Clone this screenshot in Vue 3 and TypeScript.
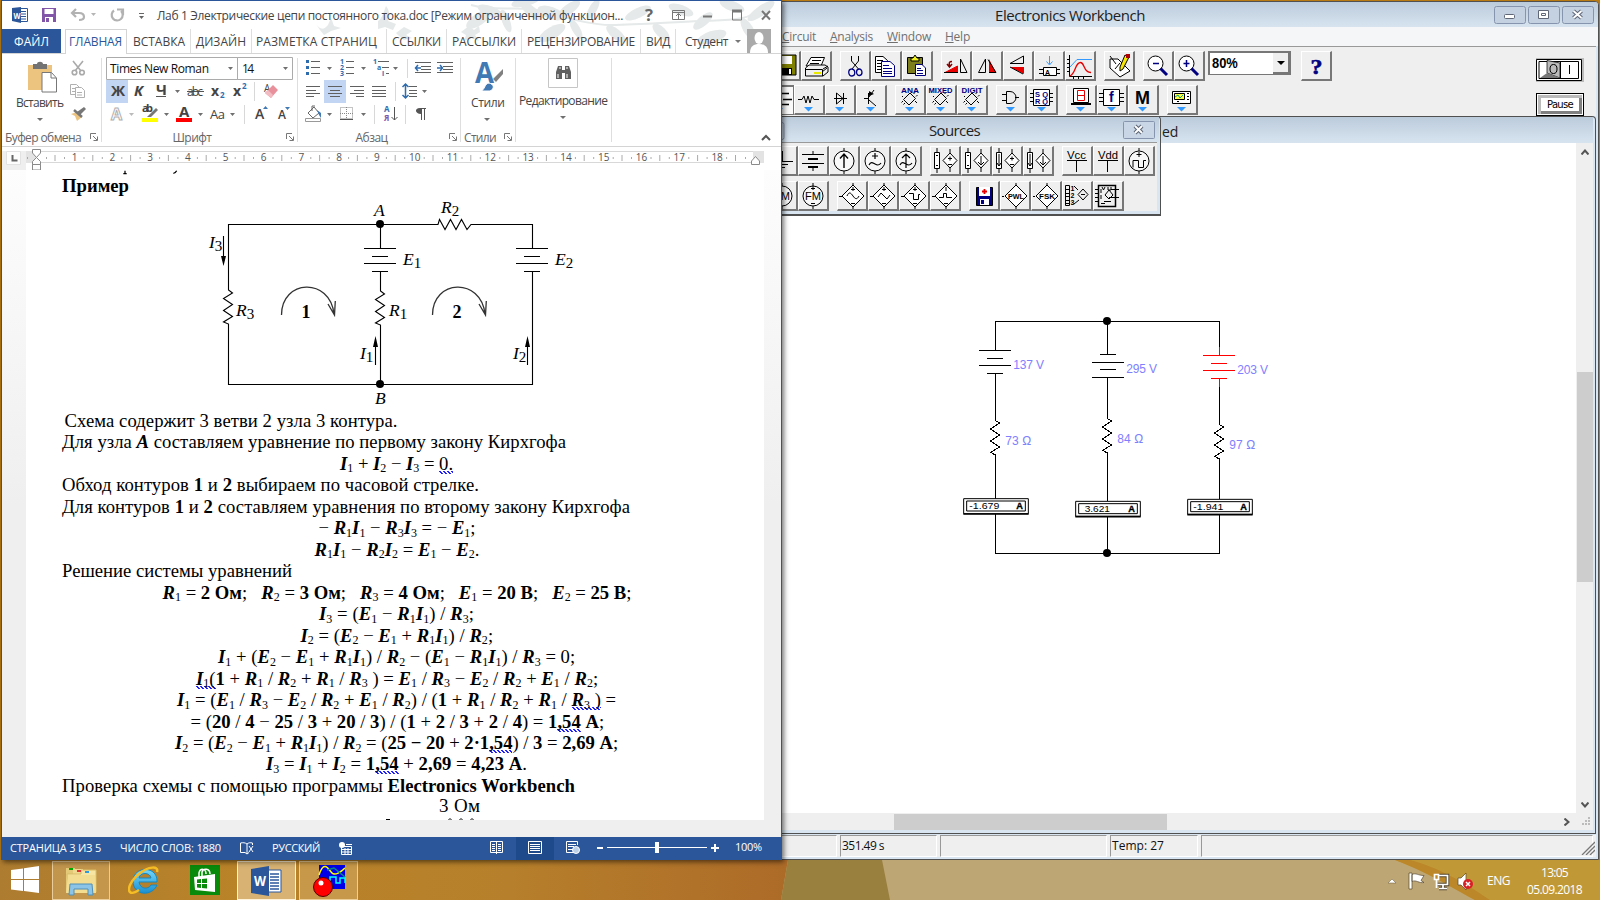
<script setup lang="ts">
import type { Directive } from 'vue'

// Spreads the letters of a label so that it takes exactly the given width.
const vFit: Directive<HTMLElement, number> = {
  mounted(el, { value }) {
    const width = el.getBoundingClientRect().width
    const count = (el.textContent ?? '').length
    if (count > 0) el.style.letterSpacing = `${(value - width) / count}px`
  },
}

interface Shape { d?: string; s?: string; f?: string; w?: number; t?: string; x?: number; y?: number; z?: number; l?: number; b?: boolean }
interface Tab { text: string; width: number; pad: number; fit: number }
interface Segment { text: string; bold: boolean; italic: boolean; sub: boolean }
interface Run { wavy: boolean; segments: Segment[] }

const tabs: Tab[] = [
  { text: 'ВСТАВКА', width: 64, pad: 6, fit: 52 },
  { text: 'ДИЗАЙН', width: 61, pad: 5, fit: 50 },
  { text: 'РАЗМЕТКА СТРАНИЦ', width: 135, pad: 4, fit: 121 },
  { text: 'ССЫЛКИ', width: 60, pad: 5, fit: 49 },
  { text: 'РАССЫЛКИ', width: 75, pad: 5, fit: 64 },
  { text: 'РЕЦЕНЗИРОВАНИЕ', width: 119, pad: 5, fit: 108 },
  { text: 'ВИД', width: 35, pad: 5, fit: 24 },
]

// Markup: * bold, % italic, ~ proofing underline, _ subscript for the next character.
function parse(source: string): Run[] {
  const runs: Run[] = [{ wavy: false, segments: [] }]
  let bold = false
  let italic = false
  let sub = false
  for (const ch of source) {
    if (ch === '*') bold = !bold
    else if (ch === '%') italic = !italic
    else if (ch === '~') runs.push({ wavy: !runs[runs.length - 1].wavy, segments: [] })
    else if (ch === '_') sub = true
    else {
      const list = runs[runs.length - 1].segments
      const last = list[list.length - 1]
      if (last && !sub && !last.sub && last.bold === bold && last.italic === italic) last.text += ch
      else list.push({ text: ch, bold: bold && !sub, italic: italic && !sub, sub })
      sub = false
    }
  }
  return runs
}
const v = (s: string) => s.replace(/([RIE])(\d)/g, '*%$1%*_$2')

const lines = [
  { left: 38.5, fit: 333, text: 'Схема содержит 3 ветви 2 узла 3 контура.' },
  { left: 36, fit: 504, text: 'Для узла *%A%* составляем уравнение по первому закону Кирхгофа' },
  { left: 314, fit: 113, text: v('I1 + I2 − I3 = ~0.~') },
  { left: 36, fit: 417, text: 'Обход контуров *1* и *2* выбираем по часовой стрелке.' },
  { left: 36, fit: 568, text: 'Для контуров *1* и *2* составляем уравнения по второму закону Кирхгофа' },
  { left: 292.5, fit: 157, text: v('− R1I1 − R3I3 = − E1;') },
  { left: 288.5, fit: 165, text: v('R1I1 − R2I2 = E1 − E2.') },
  { left: 36, fit: 230, text: 'Решение системы уравнений' },
  { left: 136.5, fit: 469, text: v('R1 = *2 Ом*;   R2 = *3 Ом*;   R3 = *4 Ом*;   E1 = *20 В*;   E2 = *25 В*;') },
  { left: 293, fit: 155, text: v('I3 = (E1 − R1I1) / R3;') },
  { left: 274.5, fit: 192.5, text: v('I2 = (E2 − E1 + R1I1) / R2;') },
  { left: 192, fit: 357, text: v('I1 + (E2 − E1 + R1I1) / R2 − (E1 − R1I1) / R3 = 0;') },
  { left: 170, fit: 402, text: v('~I1(~*1* + R1 / R2 + R1 / R3 ) = E1 / R3 − E2 / R2 + E1 / R2;') },
  { left: 151, fit: 439, text: v('I1 = (E1 / R3 − E2 / R2 + E1 / R2) / (*1* + R1 / R2 + R1 / ~R3 )~ =') },
  { left: 164.5, fit: 413.5, text: '= (*20* / *4* − *25* / *3* + *20* / *3*) / (*1* + *2* / *3* + *2* / *4*) = *1~,54~ А*;' },
  { left: 149, fit: 443, text: v('I2 = (E2 − E1 + R1I1) / R2 = (*25 − 20* + *2·1~,54~*) / *3* = *2,69 А*;') },
  { left: 240, fit: 261, text: v('I3 = I1 + I2 = *1~,54~* + *2,69* = *4,23 А*.') },
  { left: 36, fit: 513, text: 'Проверка схемы с помощью программы *Electronics Workbench*' },
].map((line) => ({ ...line, runs: parse(line.text) }))

const rulerNumbers = Array.from({ length: 18 }, (_, i) => ({ n: i + 1, x: 74.5 + i * 37.8 }))

const K = '#000'
const R = '#e80000'
const N = '#000080'
const B = '#3399ff'
const drop: Shape = { d: 'M10 22H19L14.500 26.500Z', f: B }
const chip: Shape[] = [
  { d: 'M15 8L20.500 13.500L14 20L8.500 14.500Z M8 16L6.500 17.500M10 18L8.500 19.500M18.500 9L20 7.500M21 11.500L22.500 10M8 12L7 11M20 16L22 18', s: K },
  drop,
]
const circle = 'M15 5A10 10 0 1 1 15 25A10 10 0 1 1 15 5M15 2V5M15 25V28'
const diamond = 'M16 4L27 15L16 26L5 15Z M16 2V4M16 26V28'
const dependent = 'M4.500 6.500H9.500V22.500H4.500Z M7 2V6M7 23V27M20 7L27 14.500L20 22L13 14.500Z M20 3V7M20 22V26'

const icons: Record<string, Shape[]> = {
  save: [{ d: 'M8 4H26V24H8Z', s: K, f: '#808000' }, { d: 'M11 5H22V13H11Z', f: '#fff' }, { d: 'M11 17H22V24H11Z', f: K }, { d: 'M19 18H21V23H19Z', f: '#fff' }],
  print: [{ d: 'M10 6.500H23.500L20 15H5Z', s: K, f: '#fff' }, { d: 'M11 9.500H20M9 12.500H18', s: K }, { d: 'M4.500 17L8 14H24L27 16V21L22 25H4.500Z', s: K, f: '#efefef' }, { d: 'M4 18.500H21.500V25M22 18L27 15M21 21L26 17', s: K }, { d: 'M13 22H20', s: '#e8e800', w: 2 }],
  cut: [{ d: 'M11.500 5V10L18.500 18M18.500 5V10L12 18', s: K }, { d: 'M11.500 18A3 3.500 0 1 0 12 25A3 3.500 0 1 0 11.500 18M19 18A2.500 3 0 1 0 19.500 24.500A2.500 3 0 1 0 19 18', s: N, w: 1.3 }],
  copy: [{ d: 'M4.500 5.500H12L16.500 9.500V21.500H4.500Z', s: K, f: '#fff' }, { d: 'M6 9.500H12M6 12.500H12M6 15.500H12M6 18.500H12', s: K }, { d: 'M10.500 10.500H19L23.500 14.500V25.500H10.500Z', s: N, f: '#fff' }, { d: 'M12 14.500H18M12 17.500H21M12 20.500H21M12 22.500H21', s: N }],
  paste: [{ d: 'M5.500 6.500H20.500V22.500H5.500Z', s: K, f: '#7d7d1e' }, { d: 'M9 10V7H11L13 4L15 7H17V10Z', s: K, f: '#f0ef20' }, { d: 'M13.500 13.500H20L23.500 17V24.500H13.500Z', s: N, f: '#fff' }, { d: 'M15 17.500H19M15 19.500H21M15 22.500H21', s: N }],
  rotate: [{ d: 'M4 21.500H16.500V15Z', s: R, f: R }, { d: 'M3 21.500H17M19.500 21.500V8L26 21.500Z', s: K }, { d: 'M11 10.500C7 10.500 8.500 13 8.500 16M6 13L8.500 16L11 13', s: '#800000', w: 1.5 }],
  flipH: [{ d: 'M6.500 21.500H13.500V8Z', s: K }, { d: 'M17 21.500H24L17 8Z', f: R }, { d: 'M16 8.500L24 21.500H17', s: K }],
  flipV: [{ d: 'M7 12.500L20.500 5V12.500Z', s: K }, { d: 'M7 16H21V23Z', f: R }, { d: 'M7 16L20 23', s: K }],
  sub: [{ d: 'M15.500 5V13M12.500 10.500L15.500 14L18.500 10.500', s: B }, { d: 'M9.500 16.500H22.500V24.500H9.500Z M5 18.500H9M5 22.500H9M23 18.500H26M23 22.500H26', s: K, f: '#fff' }, { t: 'A', x: 11, y: 23.5, z: 7, b: true }],
  graph: [{ d: 'M4.500 4V25.500H27M2 8.500H4M2 12.500H4M2 16.500H4M2 20.500H4M8.500 26V28M13.500 26V28M18.500 26V28', s: K }, { d: 'M5 16L12 8.500H27', s: B }, { d: 'M5 25C11 22 10 11.500 15.500 11.500C20 11.500 18 21.500 26 21.500', s: R, w: 1.3 }],
  edit: [{ d: 'M6 8L14 8L26 20L16 26L6 17Z', s: K, f: '#fff' }, { d: 'M6 5L12 13M11 18L16 12', s: K }, { d: 'M21 4L25 6L19 18L16 20V16Z', s: K, f: '#f7e600' }, { d: 'M22 3H26V7H22Z', f: '#b00000' }],
  zoomOut: [{ d: 'M12.500 5A7.500 7.500 0 1 1 12.500 20A7.500 7.500 0 1 1 12.500 5', s: K, f: '#fff' }, { d: 'M10 12.500H16', s: N, w: 1.5 }, { d: 'M17.500 17.500L24 24', s: N, w: 3 }],
  zoomIn: [{ d: 'M12.500 5A7.500 7.500 0 1 1 12.500 20A7.500 7.500 0 1 1 12.500 5', s: K, f: '#fff' }, { d: 'M9.500 12.500H15.500M12.500 9V16', s: N, w: 1.5 }, { d: 'M17.500 17.500L24 24', s: N, w: 3 }],
  source: [{ d: 'M17 7.500H25M19 13.500H28M17 18.500H25', s: K, w: 1.4 }, drop],
  resistor: [{ d: 'M4 14.500H8L10 11L12 18L14 11L16 18L18 11L20 14.500H25', s: K }, drop],
  diode: [{ d: 'M9 13.500H22M11.500 8V19L18 13.500ZM18.500 8V19', s: K }, drop],
  transistor: [{ d: 'M8 13.500H12M12.500 8V19M13 12L18 5M13 15L20 21', s: K }, { d: 'M13 11V6L18 9Z', f: K }, drop],
  ana: [{ t: 'ANA', x: 6, y: 7.5, z: 7.5, b: true, l: 18, s: N }, ...chip],
  mixed: [{ t: 'MIXED', x: 2.5, y: 7.5, z: 7.5, b: true, l: 24, s: N }, ...chip],
  digit: [{ t: 'DIGIT', x: 4.5, y: 7.5, z: 7.5, b: true, l: 21, s: N }, ...chip],
  gate: [{ d: 'M6 9.500H10M6 15.500H10M19 12.500H23M10.500 6.500H14A6 6 0 0 1 14 18.500H10.500Z', s: K }, drop],
  flop: [{ d: 'M6.500 4.500H22.500V20.500H6.500ZM3 8.500H6M3 12.500H6M3 16.500H6M23 8.500H26M23 12.500H26M23 16.500H26', s: K, f: '#fff' }, { t: 'S Q', x: 8, y: 11.5, z: 7, b: true, l: 13, s: N }, { t: 'R Q', x: 8, y: 19, z: 7, b: true, l: 13, s: N }, drop],
  seg: [{ d: 'M7.500 3.500H22.500V17.500H7.500Z', s: K, f: '#fff' }, { d: 'M11.500 5.500H18.500V15.500H11.500ZM11.500 10.500H18.500', s: R, w: 1 }, { d: 'M5 18H25V20H5Z', f: K }, drop],
  func: [{ d: 'M6.500 4.500H22.500V20.500H6.500ZM2 8.500H6M2 12.500H6M2 16.500H6M23 8.500H27M23 12.500H27M23 16.500H27', s: K, f: '#fff' }, { t: 'f', x: 12, y: 17, z: 14, b: true, s: N }, drop],
  misc: [{ t: 'M', x: 7, y: 19, z: 19, b: true, l: 15 }, drop],
  scope: [{ d: 'M5.500 6.500H23.500V18.500H5.500Z', s: K, f: '#fff' }, { d: 'M7.500 8.500H17.500V14.500H7.500Z', s: K, f: '#ffff40' }, { d: 'M8 12L11 10L13 13L16 10', s: '#00a0a0' }, { d: 'M20 8.500H22M20 11.500H22M20 14.500H22M10 16.500H12', s: K }, drop],
  ground: [{ d: 'M15.500 5V15M8 15.500H26M11 18.500H21M14 21.500H18', s: K }],
  battery: [{ d: 'M15 5V8M4 8.500H26M15 22V25', s: K }, { d: 'M10 13H20M10 21H20', s: K, w: 2 }, { d: 'M4 17.500H26', s: K }],
  current: [{ d: circle, s: K, f: '#f8f8f8' }, { d: 'M15 8V22M11 12.500L15 8L19 12.500', s: K, w: 1.4 }],
  ac: [{ d: circle, s: K, f: '#f8f8f8' }, { d: 'M15 7V13M12 10H18M9 19C11 15 13 17 15 18S19 20 21 17', s: K, w: 1.2 }],
  acCurrent: [{ d: circle, s: K, f: '#f8f8f8' }, { d: 'M15 8V22M11 12L15 8L19 12M9 19C11 15 13 17 15 18S19 20 21 17', s: K, w: 1.2 }],
  vv: [{ d: dependent, s: K, f: '#fff' }, { d: 'M6 9.500H8M6 19.500H8M18 12.500H22M20 10.500V14.500M18 18.500H22', s: K }],
  vc: [{ d: dependent, s: K, f: '#fff' }, { d: 'M6 9.500H8M6 19.500H8M20 10V19M17 16L20 19L23 16', s: K }],
  cv: [{ d: dependent, s: K, f: '#fff' }, { d: 'M7 8V20M5 17L7 20L9 17M18 12.500H22M20 10.500V14.500M18 18.500H22', s: K }],
  cc: [{ d: dependent, s: K, f: '#fff' }, { d: 'M7 8V20M5 17L7 20L9 17M20 10V19M17 16L20 19L23 16', s: K }],
  vcc: [{ t: 'Vcc', x: 5, y: 12.5, z: 11.5, l: 19 }, { d: 'M5 14.500H25M14.500 15V26', s: K }],
  vdd: [{ t: 'Vdd', x: 5, y: 12.5, z: 11.5, l: 20 }, { d: 'M5 14.500H25M14.500 15V26', s: K }],
  clock: [{ d: circle, s: K, f: '#f8f8f8' }, { d: 'M15 6V11M12.500 8.500H17.500M9 21.500V14.500H14.500V21.500H19.500V14.500H22', s: K }],
  am: [{ d: circle, s: K, f: '#f8f8f8' }, { t: 'AM', x: 7, y: 19, z: 11, l: 16 }],
  fm: [{ d: circle, s: K, f: '#f8f8f8' }, { t: 'FM', x: 7, y: 18.5, z: 11, l: 16 }, { d: 'M15 5V9M13 7.500H17M13 22.500H17', s: K }],
  sine: [{ d: diamond, s: K, f: '#fff' }, { d: 'M10 15C12 10 14 12 16 15S20 19 22 15M16 6V10M14 8.500H18M14 22.500H18M2 15.500H5', s: K }],
  tri: [{ d: diamond, s: K, f: '#fff' }, { d: 'M10 16L13 12L19 18L22 14M16 6V10M14 8.500H18M14 22.500H18M2 15.500H5', s: K }],
  square: [{ d: diamond, s: K, f: '#fff' }, { d: 'M10 12.500H14.500V18.500H19.500V13.500H21M16 6V10M14 8.500H18M14 22.500H18M2 15.500H5', s: K }],
  pulse: [{ d: diamond, s: K, f: '#fff' }, { d: 'M9 16.500H13.500V12.500H16.500V16.500H22M16 6V10M14 22.500H18M2 15.500H5', s: K }],
  disk: [{ d: 'M7.500 6.500H23.500V24.500H7.500Z', s: K, f: N }, { d: 'M10 6H21V15H10Z', f: '#fff' }, { d: 'M15.500 8V13M13 10.500H18', s: R, w: 1.8 }, { d: 'M11 18H20V24H11Z', f: '#fff' }, { d: 'M12 19H15V23H12Z', f: N }],
  pwl: [{ d: diamond, s: K, f: '#fff' }, { t: 'PWL', x: 8, y: 18, z: 8, l: 16, b: true }, { d: 'M2 15.500H4', s: K }],
  fsk: [{ d: diamond, s: K, f: '#fff' }, { t: 'FSK', x: 8, y: 18, z: 8, l: 16, b: true }, { d: 'M2 15.500H4', s: K }],
  poly: [{ d: 'M3.500 4.500H7.500V24.500H3.500ZM4 8.500H8M4 12.500H8M4 15.500H8M4 19.500H8M4 22.500H8M21 8L26 13.500L21 19L16 13.500ZM19 13.500H23M12 5L16 9M12 23L17 19', s: K }, { t: '1', x: 8.5, y: 10, z: 7, b: true }, { t: '2', x: 8.5, y: 17, z: 7, b: true }, { t: '3', x: 8.5, y: 24, z: 7, b: true }],
  nonlin: [{ d: 'M5.500 4.500H22.500V25.500H5.500Z', s: K, w: 1.5 }, { d: 'M2 8.500H5M2 12.500H5M2 16.500H5M2 20.500H5M9 6L10.500 9L12 6M15 6V9H18V6M12 14L16 9L20 14L16 18ZM8 8V12M8 14V18M11 20.500H18M8 22.500H12M16 16.500H26M18 8.500H26', s: K }],
}

const toolRow1 = [['save', 'print'], ['cut', 'copy', 'paste'], ['rotate', 'flipH', 'flipV', 'sub', 'graph'], ['edit'], ['zoomOut', 'zoomIn']]
const toolRow2 = [['source', 'resistor', 'diode', 'transistor'], ['ana', 'mixed', 'digit'], ['gate', 'flop'], ['seg', 'func', 'misc'], ['scope']]
const sourceRow1 = [['ground', 'battery', 'current', 'ac', 'acCurrent'], ['vv', 'vc', 'cv', 'cc'], ['vcc', 'vdd', 'clock']]
const sourceRow2 = [['am', 'fm'], ['sine', 'tri', 'square', 'pulse'], ['disk', 'pwl', 'fsk', 'poly', 'nonlin']]
const panels = [toolRow1, toolRow2, sourceRow1, sourceRow2]

const meters = [
  { x: 70, y: 596, value: '-1.679' },
  { x: 406, y: 604, value: '3.621' },
  { x: 742, y: 598, value: '-1.941' },
]
const resistors = ['M166.5 362l12 7-27 18 27 18-27 18 27 18-27 16 15 8', 'M502.5 356l12 7-27 18 27 18-27 18 27 18-27 16 15 8', 'M838.5 374l12 7-27 18 27 18-27 18 27 18-27 16 15 8']
</script>

<template>
  <div class="desktop">
    <section class="ewb">
      <header class="ewb-title">
        <span v-fit="150" class="ewb-name">Electronics Workbench</span>
        <div class="win-buttons">
          <svg v-for="k in 3" :key="k" width="32" height="18" viewBox="0 0 32 18">
            <rect x=".5" y=".5" width="31" height="17" rx="2" fill="#c3d1e1" stroke="#8794ad" />
            <rect v-if="k === 1" x="10.500" y="8.500" width="10" height="4" rx="1" fill="#fff" stroke="#606878" />
            <path v-if="k === 2" d="M10.500 4.500h10v8h-10zM13.500 7.500h4v2h-4z" fill="#fff" stroke="#606878" />
            <path v-if="k === 3" d="M11.500 5l8 7m0-7l-8 7" stroke="#606878" stroke-width="4" />
            <path v-if="k === 3" d="M11.500 5l8 7m0-7l-8 7" stroke="#fff" stroke-width="1.800" />
          </svg>
        </div>
      </header>
      <nav class="ewb-menu">
        <span v-fit="34"><u>C</u>ircuit</span><span v-fit="43"><u>A</u>nalysis</span><span v-fit="44"><u>W</u>indow</span><span v-fit="25"><u>H</u>elp</span>
      </nav>
      <div class="ewb-tools">
        <div class="tool-rows">
          <div v-for="p in 2" :key="p" class="row" :class="`row-${p}`">
            <div v-for="(g, gi) in panels[p - 1]" :key="gi" class="cluster">
              <svg v-for="name in g" :key="name" class="tool" :class="{ pressed: name === 'source' }" viewBox="1 1 28 27">
                <template v-for="(s, i) in icons[name]" :key="i">
                  <path v-if="s.d" :d="s.d" :stroke="s.s || 'none'" :fill="s.f || 'none'" :stroke-width="s.w || 1" />
                  <text v-else :x="s.x" :y="s.y" :font-size="s.z" :font-weight="s.b ? 700 : 400" :fill="s.s || '#000'" :textLength="s.l" lengthAdjust="spacingAndGlyphs">{{ s.t }}</text>
                </template>
              </svg>
            </div>
            <template v-if="p === 1">
              <div class="combo"><b>80%</b><i><svg width="8" height="4"><path d="M0 0h8l-4 4z" /></svg></i></div>
              <svg class="tool help" viewBox="1 1 28 27"><text x="9.500" y="23" font-size="22" font-weight="700" fill="#000080" font-family="Liberation Serif" textLength="12" lengthAdjust="spacingAndGlyphs" stroke="#000080" stroke-width=".6">?</text></svg>
            </template>
          </div>
        </div>
        <div class="power">
          <svg width="48" height="24" viewBox="0 0 48 24">
            <path d="M0 0H48V24H0Z" fill="#bbb" /><path d="M.5 1.500H45.500V22.500H.5Z" fill="#fff" stroke="#000" /><path d="M3 3.500H42.500V20.500H3Z" fill="none" stroke="#000" />
            <path d="M11 2.500L24 5V20L11 15Z" fill="#bbb" stroke="#000" stroke-width=".7" /><path d="M11 15L4 20H24Z" fill="#777" />
            <ellipse cx="17.500" cy="11" rx="3.500" ry="4.500" fill="none" stroke="#000" /><path d="M24.500 4V20M33.500 7V16" stroke="#000" />
          </svg>
          <div class="pause"><span v-fit="26">Pause</span></div>
        </div>
      </div>

      <div class="sheet">
        <div class="sheet-title"><span v-fit="16">ed</span></div>
        <div class="sheet-body">
          <div class="canvas">
            <svg class="schematic" width="360" height="270" viewBox="0 0 1080 810">
              <g fill="none" stroke="#000" stroke-width="3" shape-rendering="crispEdges">
                <path d="M166.500 151V64.500H838.500V142M166.500 220V362M166.500 466V596M166.500 643V760.500H838.500V646M838.500 260V374M838.500 478V598M502.500 64V163M502.500 233V356M502.500 460V604M502.500 652V760" />
                <path d="M117 151.500H213M141 175.500H189M117 196.500H213M141 220.500H189M480 163.500H528M456 187.500H552M480 208.500H528M456 232.500H552" />
                <path stroke="#f00" d="M838.500 142V166M838.500 236V260M789 166.500H885M813 190.500H861M789 211.500H885M813 235.500H861" />
                <path v-for="d in resistors" :key="d" :d="d" />
              </g>
              <circle cx="501" cy="63" r="12" /><circle cx="501" cy="759" r="12" />
              <g v-for="m in meters" :key="m.value">
                <path :d="`M${m.x + 1} ${m.y}h194v45h-194z`" fill="#fff" stroke="#000" stroke-width="3" />
                <path :d="`M${m.x} ${m.y + 46}h196`" stroke="#000" stroke-width="5" />
                <path :d="`M${m.x + 10} ${m.y + 7}h176v30h-176z`" fill="#fff" stroke="#000" stroke-width="3" />
                <text :x="m.x + (m.value[0] === '-' ? 18 : 28)" :y="m.y + 32" font-size="27" :textLength="m.value[0] === '-' ? 90 : 76" lengthAdjust="spacingAndGlyphs">{{ m.value }}</text>
                <text :x="m.x + 159" :y="m.y + 31" font-size="27" font-weight="700" textLength="20" lengthAdjust="spacingAndGlyphs" stroke="#000">A</text>
              </g>
              <g fill="#8080ff" font-size="36">
                <text x="220" y="206" textLength="92">137 V</text><text x="559" y="219" textLength="92">295 V</text><text x="892" y="221" textLength="92">203 V</text>
                <text x="196" y="435" textLength="78">73 Ω</text><text x="532" y="429" textLength="78">84 Ω</text><text x="868" y="447" textLength="78">97 Ω</text>
              </g>
            </svg>
          </div>
          <div class="vscroll">
            <svg width="8" height="6"><path d="M.5 5.500L4 1.500L7.500 5.500" /></svg>
            <i></i>
            <svg width="8" height="6"><path d="M.5 .5L4 4.500L7.500 .5" /></svg>
          </div>
        </div>
        <div class="hscroll"><i></i><svg width="6" height="8"><path d="M.5 .5L4.500 4L.5 7.500" /></svg><svg class="grip" width="9" height="9"><path d="M6 0h2v2h-2zM3 3h2v2h-2zM6 3h2v2h-2zM0 6h2v2h-2zM3 6h2v2h-2zM6 6h2v2h-2z" /></svg></div>
      </div>

      <footer class="ewb-status">
        <span class="s1"></span><span class="s2"><em v-fit="42">351.49 s</em></span><span class="s3"></span><span class="s4"><em v-fit="52">Temp:  27</em></span><span class="s5"></span>
        <svg width="14" height="14"><path d="M1 14L14 1M5 14L14 5M9 14L14 9" stroke="#777" fill="none" stroke-width="1.300" /></svg>
      </footer>

      <div class="sources">
        <header><span v-fit="51">Sources</span>
          <svg class="stub" width="8" height="18"><rect x="-10" y=".5" width="15" height="17" rx="2" fill="none" stroke="#8794ad" /></svg>
          <svg class="x" width="32" height="18" viewBox="0 0 32 18"><rect x=".5" y=".5" width="31" height="17" rx="1" fill="#c9d6e5" stroke="#8794ad" /><path d="M12 5l7 7m0-7l-7 7" stroke="#606878" stroke-width="4" /><path d="M12 5l7 7m0-7l-7 7" stroke="#fff" stroke-width="1.800" /></svg>
        </header>
        <div class="source-rows">
          <div v-for="p in [2, 3]" :key="p" class="row">
            <div v-for="(g, gi) in panels[p]" :key="gi" class="cluster">
              <svg v-for="name in g" :key="name" class="tool" viewBox="1 1 28 27">
                <template v-for="(s, i) in icons[name]" :key="i">
                  <path v-if="s.d" :d="s.d" :stroke="s.s || 'none'" :fill="s.f || 'none'" :stroke-width="s.w || 1" />
                  <text v-else :x="s.x" :y="s.y" :font-size="s.z" :font-weight="s.b ? 700 : 400" :fill="s.s || '#000'" :textLength="s.l" lengthAdjust="spacingAndGlyphs">{{ s.t }}</text>
                </template>
              </svg>
            </div>
          </div>
        </div>
      </div>
    </section>

    <section class="word">
      <svg class="foliage" width="470" height="48" viewBox="310 0 470 48" fill="#e3e7e7">
        <path d="M315 23c4 6 8 6 12 1l3-7 3 8 7 2-10 3-7 4-4-5zM377 20c4-2 6-10 8-15 4 5 4 12 2 15l8 3-3 6-8-3-7 2zM395 32l8-6 8 4-6 4 6 3-8 2-4-3zM460 31l8-6 5 4 5-4 1 6-5 3 4 6-7-3-8 3 2-6z" />
        <path d="M470 4c20 6 40 2 60 4s50 16 80 16 60-3 90-4 50 0 60-14" fill="none" stroke="#e3e7e7" stroke-width="2" />
        <ellipse v-for="(e, i) in [[478,18,15,6,-35],[489,10,13,5,20],[505,20,12,4,70],[530,10,13,5,40],[525,0,15,5,-15],[550,12,14,6,20],[551,32,15,6,-30],[575,28,11,4,60],[568,8,13,5,-35],[592,8,11,4,-60],[615,33,12,5,40],[637,12,14,5,-25],[660,31,11,5,45],[680,9,13,5,20],[702,20,12,5,-40],[711,36,15,6,-18],[731,5,13,5,20],[747,28,12,5,60],[760,10,16,5,-35]]" :key="i" :cx="e[0]" :cy="e[1]" :rx="e[2]" :ry="e[3]" :transform="`rotate(${e[4]} ${e[0]} ${e[1]})`" />
      </svg>
      <header class="word-title">
        <svg width="155" height="28" viewBox="2 1 155 28" fill="none">
          <path d="M20 8.500H27.500V21.500H20" stroke="#2b579a" fill="#fff" /><path d="M21 11.500h5m-5 2.500h5m-5 2.500h5m-5 2.500h5" stroke="#2b579a" /><path d="M12 8L21 7V23L12 21Z" fill="#2b579a" /><text x="13.500" y="18.500" font-size="9" font-weight="700" fill="#fff" textLength="7" lengthAdjust="spacingAndGlyphs">W</text>
          <path d="M42 8H56V22H42Z" fill="#8255a8" /><path d="M44.500 9H53.500V14H44.500ZM45 17H53V22H45Z" fill="#fff" /><path d="M46 18h3v4h-3z" fill="#8255a8" />
          <path d="M76 9L72 13L76 17M73 13H79C83 13 84 15 84 17C84 20 81 20 79 20" stroke="#b2b2b2" stroke-width="2.200" /><path d="M91 13h5l-2.500 3z" fill="#b5b5b5" />
          <path d="M114 10.500A5.500 5.500 0 1 0 121 11M117 9.500H123V15" stroke="#b2b2b2" stroke-width="2.200" />
          <path d="M139 13.500h5" stroke="#666" /><path d="M139 16h5l-2.500 3z" fill="#666" />
        </svg>
        <span v-fit="466" class="doc-name">Лаб 1 Электрические цепи постоянного тока.doc [Режим ограниченной функцион...</span>
        <svg width="150" height="28" viewBox="631 1 150 28" fill="none" stroke="#777">
          <text x="645" y="20.500" font-size="16" font-weight="700" fill="#666" stroke="none" textLength="8" lengthAdjust="spacingAndGlyphs">?</text>
          <path d="M672.500 10.500h12v9h-12zM672 12.500h13M678.500 19v-5m-2.500 2l2.500-2.500l2.500 2.500" /><path d="M703 16.500h9" stroke-width="2" /><path d="M732.500 11v9h9v-9" /><path d="M732 11h10" stroke-width="3" /><path d="M762 11l8 8.500m0-8.500l-8 8.500" stroke-width="2" />
        </svg>
      </header>
      <nav class="tabs">
        <span class="file"><b v-fit="35">ФАЙЛ</b></span>
        <span class="active"><b v-fit="53">ГЛАВНАЯ</b></span>
        <span v-for="t in tabs" :key="t.text" class="tab" :style="{ width: `${t.width}px`, paddingLeft: `${t.pad}px` }"><b v-fit="t.fit">{{ t.text }}</b></span>
        <span class="user"><b v-fit="43">Студент</b><svg width="6" height="3"><path d="M0 0h6L3 3z" fill="#777" /></svg></span>
        <svg class="avatar" width="24" height="24"><path d="M0 0H24V24H0Z" fill="#aaa" /><ellipse cx="12" cy="9" rx="4.500" ry="6" fill="#fff" /><path d="M3 24C3 17 7 15 12 15S21 17 21 24Z" fill="#fff" /></svg>
      </nav>

      <div class="ribbon">
        <div class="group g1">
          <svg width="99" height="74" viewBox="2 54 99 74">
            <path d="M28 65H52V90H28Z" fill="#ecc480" /><path d="M33 64H37C37 61 43 61 43 64H47V69H33Z" fill="#737373" /><path d="M42 72.500H51.500L56.500 78V92H42Z" fill="#fff" stroke="#777" /><path d="M51 73V78H56" fill="none" stroke="#777" />
            <text x="16" y="107" textLength="48">Вставить</text><path class="arr" d="M37 118h6l-3 3z" />
            <g fill="none" stroke="#aaa" stroke-width="1.600"><path d="M73 61L81 71M83 61L75 71" /><circle cx="74.500" cy="72.500" r="2.300" /><circle cx="82" cy="72.500" r="2.300" /></g>
            <g fill="#fff" stroke="#b0b0b0"><path d="M70.500 84.500H76.500L79.500 87.500V94.500H70.500Z" /><path d="M75.500 87.500H81.500L84.500 90.500V97.500H75.500Z" /><path d="M72 88.500h3m-3 3h3M77 92.500h5m-5 2.500h5" /></g>
            <path d="M84 107L86 109L80 115L77 112Z" fill="#777" /><path d="M71 114L77 112L82 117L77 121L75 116Z" fill="#ecc480" /><path d="M74 110L82 117" stroke="#777" stroke-width="2.500" />
          </svg>
          <div class="label"><span v-fit="76">Буфер обмена</span><svg class="launch" viewBox="0 0 8 8"><path d="M.5 6V.5H6M3 3l4 4M7.500 3.500v4h-4" /></svg></div>
        </div>
        <div class="group g2">
          <svg width="196" height="74" viewBox="102 54 196 74">
            <path d="M106.500 57.500H237.500V79.500H106.500ZM237.500 57.500H292.500V79.500H237.500Z" fill="#fff" stroke="#ababab" />
            <text x="110" y="73" textLength="99" fill="#222">Times New Roman</text><text x="242" y="73" textLength="12" fill="#222">14</text><path class="arr" d="M228 67h5l-2.500 3zM283 67h5l-2.500 3z" />
            <path d="M106 80H128V103H106Z" fill="#c2d5f2" />
            <g font-weight="700"><text x="111" y="96" font-size="15" textLength="12">Ж</text><text x="134" y="96" font-size="15" font-style="italic" textLength="8">К</text><text x="156" y="95" font-size="15" textLength="9">Ч</text></g>
            <path d="M156 96.500H166M187 91.500H204" stroke="#555" /><text x="187" y="95.500" font-size="12" font-weight="500" textLength="16">abc</text>
            <g font-weight="700"><text x="211" y="96" font-size="14" textLength="8">x</text><text x="233" y="96" font-size="14" textLength="8">x</text></g><text x="220" y="98" class="b" font-size="8">2</text><text x="242" y="89" class="b" font-size="8">2</text>
            <path class="arr" d="M175 90h5l-2.500 3zM164 113h5l-2.500 3zM198 113h5l-2.500 3zM230 113h5l-2.500 3z" /><path d="M129 113h5l-2.500 3z" fill="#bbb" />
            <text x="264" y="92" font-size="10" textLength="7">A</text><path d="M265 93L273 85L278 90L271 98Z" fill="#e8919c" /><path d="M265 93L268 90L273 95L271 98Z" fill="#f2bcc3" />
            <text x="111" y="120" font-size="16" font-weight="700" fill="#fff" stroke="#b0b0b0" textLength="12">A</text>
            <text x="142" y="112" font-size="11" font-weight="700" textLength="11">ab</text><path d="M156 108L158 110L151 117L147 117Z" fill="#777" /><path d="M142 118H158V122H142Z" fill="#ff0" />
            <text x="179" y="117" font-size="15" font-weight="700" textLength="10">A</text><path d="M176 118H192V122H176Z" fill="#f00" /><text x="210" y="119" font-size="13" textLength="15">Aa</text>
            <text x="255" y="119" font-size="14" font-weight="600" textLength="9">A</text><text x="278" y="119" font-size="12" font-weight="600" textLength="7">A</text><path d="M263 109h5l-2.500-3zM285 107h5l-2.500 3z" fill="#4179b5" />
            <path d="M254.500 82V101M244.500 105V124" stroke="#d8d8d8" />
          </svg>
          <div class="label"><span v-fit="39">Шрифт</span><svg class="launch" viewBox="0 0 8 8"><path d="M.5 6V.5H6M3 3l4 4M7.500 3.500v4h-4" /></svg></div>
        </div>
        <div class="group g3">
          <svg width="162" height="74" viewBox="298 54 162 74">
            <path d="M324 80H346V103H324Z" fill="#c2d5f2" />
            <path d="M311 61.500H320M311 67.500H320M311 73.500H320M346 61.500H354M346 67.500H354M346 73.500H354M378 61.500H389M382 67.500H389M386 73.500H389M415 62.500H431M421 66.500H431M421 69.500H431M415 72.500H431M437 62.500H453M443 66.500H453M443 69.500H453M437 72.500H453M306 86.500H320M306 90.500H316M306 93.500H320M306 96.500H314M328 86.500H342M330 90.500H340M328 93.500H342M330 96.500H340M350 86.500H364M354 90.500H364M350 93.500H364M356 96.500H364M372 86.500H386M372 90.500H386M372 93.500H386M372 96.500H386M409 86.500H417M409 90.500H417M409 93.500H417M409 96.500H417" stroke="#606060" />
            <path class="bf" d="M306 60h3v3h-3zM306 66h3v3h-3zM306 72h3v3h-3z" /><g class="b" font-size="7"><text x="340" y="64">1</text><text x="340" y="70">2</text><text x="340" y="76">3</text><text x="373" y="64">1</text><text x="377" y="70">a</text><text x="382" y="76">i</text></g>
            <path d="M421 68H416M418 65L415.500 68L418 71M437 68H442M440 65L442.500 68L440 71M405.500 84V97M402.500 87L405.500 84L408.500 87M402.500 95L405.500 98L408.500 95" fill="none" stroke="#2f6cae" stroke-width="1.500" />
            <path class="arr" d="M327 67h5l-2.500 3zM361 67h5l-2.500 3zM393 67h5l-2.500 3zM422 90h5l-2.500 3zM327 113h5l-2.500 3zM361 113h5l-2.500 3z" />
            <path d="M407.500 59V78M395.500 82V101M374.500 105V124M405.500 105V124" stroke="#d8d8d8" />
            <path d="M308 113L314 107L319 113L313 118Z" fill="#fff" stroke="#666" /><path d="M312 111V106H315" fill="none" stroke="#666" /><path d="M317 110L321 113V118L319 115Z" fill="#4179b5" /><path d="M305.500 118.500h15v3h-15z" fill="#fff" stroke="#999" />
            <path d="M340.500 107.500h12v11h-12zM346.500 107v12M340 113.500h13" fill="none" stroke="#888" stroke-dasharray="1 1" /><path d="M340 119.500h13" stroke="#555" />
            <g font-size="8" font-weight="700"><text x="384" y="112" fill="#2f6cae">А</text><text x="384" y="121" fill="#8255a8">Я</text></g><path d="M394.500 107V120M391.500 117L394.500 120L397.500 117" fill="none" stroke="#555" /><path d="M420 108H426V109H425V120H424V109H422V120H421V114C415 114 414 108 420 108Z" fill="#555" />
          </svg>
          <div class="label"><span v-fit="32">Абзац</span><svg class="launch" viewBox="0 0 8 8"><path d="M.5 6V.5H6M3 3l4 4M7.500 3.500v4h-4" /></svg></div>
        </div>
        <div class="group g4">
          <svg width="54" height="74" viewBox="461 54 54 74">
            <text x="475" y="83" font-size="29" font-weight="700" fill="#4179b5" textLength="19" lengthAdjust="spacingAndGlyphs">A</text><path d="M503 69L503 74L496 82L493 79Z" fill="#808080" /><path d="M481 91C485 90 484 84 489 83C494 84 495 89 490 91Z" fill="#4179b5" stroke="#fff" />
            <text x="471" y="107" textLength="34">Стили</text><path class="arr" d="M484 118h6l-3 3z" />
          </svg>
          <div class="label"><span v-fit="32">Стили</span><svg class="launch" viewBox="0 0 8 8"><path d="M.5 6V.5H6M3 3l4 4M7.500 3.500v4h-4" /></svg></div>
        </div>
        <div class="group g5">
          <svg width="95" height="74" viewBox="516 54 95 74">
            <path d="M548.500 58.500H577.500V87.500H548.500Z" fill="#fff" stroke="#c6c6c6" /><path d="M556 72L558 66H562V70H565V66H569L571 72V79H565V73H562V79H556Z" fill="#606060" /><path d="M558 74v4m9-4v4m-8-10h2m5 0h2" stroke="#fff" />
            <text x="519" y="105" textLength="89">Редактирование</text><path class="arr" d="M560 116h6l-3 3z" />
          </svg>
        </div>
        <svg class="collapse" width="10" height="7"><path d="M1 6L5 2L9 6" fill="none" stroke="#555" stroke-width="2" /></svg>
      </div>

      <svg class="ruler" width="779" height="23" viewBox="2 147 779 23">
        <path d="M2 151H26V170H2Z" fill="#efefef" /><path d="M6.500 151.500h14v13h-14z" fill="#fdfdfd" stroke="#e2e2e2" /><path d="M12.500 155v5.500h5" fill="none" stroke="#666" stroke-width="2" />
        <path d="M26 151.500H764M26 162.500H764" stroke="#d8d8d8" /><path d="M26 151H37V163H26ZM753 151H764V163H753Z" fill="#e3e3e3" />
        <g v-for="r in rulerNumbers" :key="r.n"><text :x="r.x" y="161" font-size="10" text-anchor="middle" font-weight="500">{{ r.n }}</text><path :d="`M${r.x - 19.500} 155v6M${r.x + 9.500} 157v2M${r.x - 10} 157v2`" stroke="#aaa" /></g>
        <path d="M735.500 155v6M745.500 157v2M27.500 157v2M46.500 157v2" stroke="#aaa" />
        <path d="M32.500 149.500H40.500V153L36.500 157.500L32.500 153ZM36.500 157.500L40.500 161.500V164.500H32.500V161.500ZM32.500 164.500h8v5.500h-8zM751.500 164.500V161L755.500 156.500L759.500 161V164.500Z" fill="#fff" stroke="#8a8a8a" />
      </svg>

      <div class="workspace">
        <article class="page">
          <svg class="clipped" width="738" height="6" viewBox="26 170 738 6"><path d="M69 174.500h4M71 171v3M133 171c-1 2-2 3-4 3" fill="none" stroke="#000" stroke-width="1.500" /></svg>
          <div class="line heading"><span v-fit="67">Пример</span></div>
          <svg class="figure" width="738" height="213" viewBox="26 197 738 213">
            <g fill="none" stroke="#000" stroke-width="1.100">
              <path d="M380 224.500H228.500V290l4 3-9 5.500 9 6-9 6 9 6-9 5.500 5 2V384.500H532.500V271M380 224.500H438l1.500-5 5.500 10 5.500-10 5.500 10 5.500-10 5.500 10 4-5H532.500V248M380.500 224V248M380.500 271V291l4 3-9 5.500 9 6-9 6 9 6-9 5.500 5 2V384" />
              <path d="M364 248.500H396M372 256.500H388M364 263.500H396M372 271.500H388M516 248.500H548M524 256.500H540M516 263.500H548M524 271.500H540M223.500 236V260M375.500 365V340M527.500 365V340" />
            </g>
            <path d="M221 256l2.500 10 2.500-10zM373 347l2.500-11 2.500 11zM525 347l2.500-11 2.500 11z" />
            <g fill="none" stroke="#333" stroke-width="1.300"><path d="M281.500 315C281.500 279 330 277 334 314M328 304l6.500 11 .8-14M432.500 315C432.500 279 481 277 485 314M479 304l6.500 11 .8-14" /></g>
            <circle cx="380" cy="224" r="4" /><circle cx="380" cy="384" r="4" />
            <g font-size="17.500" font-style="italic"><text x="374" y="216">A</text><text x="375" y="404">B</text>
              <text x="441" y="213">R<tspan class="n" dy="3">2</tspan></text><text x="209" y="248">I<tspan class="n" dy="3">3</tspan></text><text x="403" y="265">E<tspan class="n" dy="3">1</tspan></text><text x="555" y="265">E<tspan class="n" dy="3">2</tspan></text>
              <text x="236" y="316">R<tspan class="n" dy="3">3</tspan></text><text x="389" y="316">R<tspan class="n" dy="3">1</tspan></text><text x="360" y="359">I<tspan class="n" dy="3">1</tspan></text><text x="513" y="359">I<tspan class="n" dy="3">2</tspan></text></g>
            <g font-size="18" font-weight="700"><text x="301.500" y="318">1</text><text x="452.500" y="318">2</text></g>
          </svg>
          <div v-for="(line, i) in lines" :key="i" class="line" :style="{ paddingLeft: `${line.left}px` }">
            <span v-fit="line.fit"><span v-for="(run, j) in line.runs" :key="j" :class="{ wavy: run.wavy }"><span v-for="(s, k) in run.segments" :key="k" :class="{ bold: s.bold, italic: s.italic, sub: s.sub }">{{ s.text }}</span></span></span>
          </div>
          <svg class="tail" width="738" height="24" viewBox="26 796 738 24"><text x="439" y="812" font-size="19" textLength="41">3 Ом</text><path d="M448 820.500l2-2 2 2M459 820.500l2-2 2 2M470 820.500l2-2 2 2M386 819.500h4" fill="none" stroke="#000" /></svg>
        </article>
      </div>

      <footer class="word-status">
        <span v-fit="91">СТРАНИЦА 3 ИЗ 5</span><span v-fit="101">ЧИСЛО СЛОВ: 1880</span>
        <svg width="15" height="13" viewBox="0 0 15 13"><path d="M7 12V2C5 .5 3 .5 .5 1V10.500H5L7 12M7 2C9 .5 10 .5 12.500 1V3M7 12L9 10.500M9 4l4 6m0-6l-4 6" fill="none" stroke="#fff" /></svg>
        <span v-fit="48">РУССКИЙ</span>
        <svg width="13" height="13" viewBox="0 0 13 13"><path d="M2.500 4.500h10v8h-10zM3 7.500h9M3 10h9M6 6v6M9 6v6M7 2.500h6" fill="none" stroke="#fff" /><circle cx="3" cy="3" r="3" fill="#fff" /></svg>
        <svg class="views" width="292" height="23" viewBox="480 837 292 23" fill="none" stroke="#fff">
          <path d="M516 837H554V860H516Z" fill="#1e4a8c" stroke="none" />
          <path d="M490.500 841.500H502.500V852.500H490.500ZM496.500 842V854M492 844.500h3m-3 2h3m-3 2h3m-3 2h3m3-6h3m-3 2h3m-3 2h3m-3 2h3" />
          <path d="M528.500 841.500h13v12h-13zM530 844.500h10m-10 2h10m-10 2h10m-10 2h10" />
          <path d="M577 852.500H566.500V841.500H577.500V845M568 844.500h8m-8 2h6m-6 3h5" /><circle cx="576" cy="850" r="3.500" fill="#bcd0e8" />
          <path d="M607 847.500H707" /><path d="M597 848h6M711 848h8M715 844v8" stroke-width="2" /><path d="M655 842H659V853H655Z" fill="#fff" stroke="none" />
          <text x="735" y="851" font-size="11" fill="#fff" stroke="none" textLength="27">100%</text>
        </svg>
      </footer>
    </section>

    <footer class="taskbar">
      <svg class="backdrop" width="1600" height="40" viewBox="0 0 1600 40">
        <defs><linearGradient id="gold"><stop offset="0" stop-color="#ae7c30" /><stop offset=".3" stop-color="#b98328" /><stop offset=".65" stop-color="#b67f2b" /><stop offset="1" stop-color="#ad6b28" /></linearGradient></defs>
        <rect width="1600" height="40" fill="#bda574" />
        <path d="M0 0H788L781 40H0Z" fill="url(#gold)" /><path d="M788 0H882L890 40H781Z" fill="#99803f" /><path d="M1395 0C1430 13 1450 27 1475 40H1600V0Z" fill="#c09936" /><path d="M1395 0C1430 13 1450 27 1475 40H1490C1455 16 1430 5 1410 0Z" fill="#bc8729" />
      </svg>
      <svg class="start" width="28" height="28"><path d="M0 4L12 2.500V13H0ZM13 2.300L28 0V13H13ZM0 14H12V25L0 23.500ZM13 14H28V27L13 25Z" fill="#fff" /></svg>
      <div class="task t1"><svg width="32" height="30"><path d="M1 2H10V26H1Z" fill="#e4c978" /><path d="M8 3H18V26H8Z" fill="#efd98e" /><path d="M16 4H31V26H4L2 8H16Z" fill="#f6e5a3" stroke="#d8bc66" /><path d="M3 9H30L31 27H1Z" fill="#f3dd91" /><path d="M4 29L5 18H27L28 29H23V23H9V29Z" fill="#8bc4e6" stroke="#5190b8" /><path d="M4 3h4" stroke="#0a0" stroke-width="2" /><path d="M12 5h4" stroke="#d33" stroke-width="2" /><path d="M20 6h4" stroke="#39d" stroke-width="2" /></svg></div>
      <svg class="ie" width="32" height="32"><defs><linearGradient id="ieb" x2="0" y2="1"><stop stop-color="#75d7fa" /><stop offset="1" stop-color="#1a8fd0" /></linearGradient></defs><path d="M29 18H11C12 25 20 26 23 21H29C24 33 5 32 5 17C5 2 30 1 29 18ZM11 14H23C22 8 12 8 11 14Z" fill="url(#ieb)" stroke="#1787c0" /><path d="M29 8C31 1 20 3 12 9C3 16-1 25 2 28C4 30 8 28 11 26" fill="none" stroke="#f6bd24" stroke-width="2.500" /></svg>
      <svg class="store" width="30" height="30"><path d="M0 0H30V30H0Z" fill="#0a8a0a" /><path d="M4 12L25 9V27L5 25Z" fill="#fff" /><path d="M9 12V8C10 3 16 3 16 9M12 11V7C13 3 20 3 20 9" fill="none" stroke="#fff" stroke-width="1.500" /><path d="M7 14.500L11 14V18H7ZM12 14L17 13.500V18H12ZM7 19H11V23L7 22.500ZM12 19H17V23.500L12 23Z" fill="#0a8a0a" /></svg>
      <div class="task t2"><svg width="32" height="30"><path d="M16 4H30V26H16Z" fill="#fff" stroke="#2b579a" /><path d="M19 8H28M19 11H28M19 14H28M19 17H28M19 20H28M19 23H28" stroke="#2b579a" stroke-width="1.500" /><path d="M0 3L18 0V30L0 27Z" fill="#2b579a" /><text x="3" y="20" font-size="14" font-weight="700" fill="#fff" textLength="12" lengthAdjust="spacingAndGlyphs">W</text></svg></div>
      <div class="task t3"><svg width="34" height="32"><path d="M7 0H33V24H7Z" fill="#0000e8" /><path d="M7 10C12-6 17 5 20 8S29 7 33 3" fill="none" stroke="#ff0" stroke-width="1.500" /><path d="M15 5L22 3L33 12" fill="none" stroke="#088" stroke-width="1.500" /><path d="M15 17H18V12H24V18H28V13H33V18" fill="none" stroke="#0ff" stroke-width="1.500" /><circle cx="11" cy="22" r="9.500" fill="#f00" stroke="#500" /><circle cx="9" cy="18" r="2.500" fill="#fff" /></svg></div>
      <div class="tray">
        <svg width="90" height="40" viewBox="1385 860 90 40"><path d="M1388 883l4-4 4 4z" fill="#fff" stroke="#6b5a3a" stroke-width=".5" />
          <g stroke="#54472e" fill="#fff"><path d="M1409 873h3v16h-3zM1412 874.500c4-2 6 1 12 1l-3 5 3 2c-5 1-8-3-12-1z" stroke-width=".7" /></g><path d="M1438.500 875.500h9v9h-10M1443 885v3M1439 888.500h8" fill="none" stroke="#54472e" stroke-width="3.500" /><path d="M1438.500 875.500h9v9h-10M1443 885v3M1439 888.500h8M1434.500 874.500h4v5h-4zM1436.500 880v8" fill="none" stroke="#fff" stroke-width="1.700" />
          <path d="M1458 878h3l5-5v17l-5-5h-3z" fill="#fff" stroke="#54472e" stroke-width=".7" /><circle cx="1468" cy="884" r="5" fill="#d82027" /><path d="M1466 882l4 4m0-4l-4 4" stroke="#fff" stroke-width="1.500" /></svg>
        <span v-fit="23" class="lang">ENG</span>
        <div class="clock"><span v-fit="27">13:05</span><span v-fit="55">05.09.2018</span></div>
      </div>
    </footer>
  </div>
</template>

<style>
body { overflow: hidden; }
</style>

<style scoped>
* { box-sizing: border-box; }
.desktop { position: relative; width: 1600px; height: 900px; overflow: hidden; background: #b97a12; font-family: "Open Sans", "Noto Sans", sans-serif; font-size: 12px; }
svg { display: block; flex: none; }
span { white-space: pre; }

.word { position: absolute; z-index: 5; left: 1px; top: 0; width: 781px; height: 860px; border: 1px solid #2b579a; border-bottom: 0; background: #fff; color: #444; box-shadow: 2px 2px 5px rgba(0, 0, 0, .55); display: flex; flex-direction: column; }
.foliage { position: absolute; right: 0; top: 0; opacity: .9; }
.word-title { display: flex; height: 28px; position: relative; }
.doc-name { flex: none; line-height: 29px; display: block; width: max-content; }
.word-title > svg:last-child { margin-left: auto; }
.tabs { position: relative; display: flex; height: 25px; border-bottom: 1px solid #d4d4d4; line-height: 25px; }
.tabs b { font-weight: 400; display: inline-block; }
.tabs span { flex: none; }
.file { background: #2b579a; color: #fff; width: 59px; padding-left: 12px; margin-right: 4px; }
.active { width: 62px; height: 25px; padding-left: 3px; color: #2b579a; background: #fff; border: 1px solid #d4d4d4; border-bottom: 0; line-height: 24px; }
.tab { border-right: 1px solid #dedede; height: 24px; }
.user { display: flex; align-items: center; gap: 7px; padding-left: 9px; width: 71px; }
.ribbon { display: flex; height: 93px; border-bottom: 1px solid #d4d4d4; position: relative; }
.group { display: flex; flex-direction: column; position: relative; }
.group::after { content: ""; position: absolute; right: 0; top: 4px; height: 84px; border-right: 1px solid #dedede; }
.group > svg { overflow: visible; }
.g1 { width: 100px; } .g2 { width: 196px; } .g3 { width: 163px; } .g4 { width: 55px; } .g5 { width: 96px; }
.group text { fill: #444; }
.group text[fill="#fff"] { fill: #fff; }
.group text[fill="#222"] { fill: #111; }
.group text[fill="#4179b5"] { fill: #4179b5; }
.group text[fill="#2f6cae"] { fill: #2f6cae; }
.group text[fill="#8255a8"] { fill: #8255a8; }
.group .b, .group .b text { fill: #2f6cae; font-weight: 700; }
.bf { fill: #2f6cae; }
.arr { fill: #707070; }
.label { display: flex; align-items: center; justify-content: center; height: 20px; color: #666; }
.label span { display: inline-block; }
.g1 .label { justify-content: flex-start; padding-left: 3px; gap: 9px; }
.g2 .label, .g3 .label { position: relative; }
.g2 .label .launch, .g3 .label .launch { position: absolute; right: 4px; }
.g2 .label { padding-right: 16px; } .g3 .label { padding-right: 16px; }
.g4 .label { justify-content: flex-start; padding-left: 3px; gap: 8px; }
.launch { width: 8px; height: 8px; fill: none; stroke: #777; }
.collapse { margin: 80px 10px 0 auto; }
.ruler { background: #fff; color: #444; }
.ruler text { fill: #555; }
.workspace { height: 667px; padding: 0 17px 17px 24px; background: linear-gradient(#fdfdfd, #efefef 50%); }
.page { width: 738px; height: 650px; background: #fff; overflow: hidden; font-family: "Liberation Serif", serif; color: #000; display: flex; flex-direction: column; }
.clipped { height: 5px; }
.line { height: 21.47px; flex: none; line-height: 21.47px; font-size: 18.67px; }
.line > span { display: inline-block; }
.heading { padding-left: 36px; font-weight: 700; }
.bold { font-weight: 700; } .italic { font-style: italic; }
.sub { font-size: 12px; position: relative; top: 2.5px; line-height: 0; }
.wavy { background: linear-gradient(45deg, transparent 38%, #22f 38% 62%, transparent 62%) 0 100% / 4px 3px repeat-x; }
.n { font-style: normal; font-size: 15px; }
.figure, .tail { flex: none; }
.figure { margin-top: .53px; }
.word-status { height: 23px; background: #2b579a; color: #fff; display: flex; align-items: center; padding-left: 8px; font-size: 11px; }
.word-status > span { margin-right: 19px; display: inline-block; line-height: 15px; padding-bottom: 2px; height: 17px; }
.word-status > span:nth-of-type(3) { margin: 0 19px 0 17px; }
.views { margin-left: 128px; }

.ewb { position: absolute; left: 760px; top: 1px; width: 839px; height: 859px; border: 1px solid #505050; border-radius: 0 4px 0 0; background: #d9e6f2; display: flex; flex-direction: column; }
.ewb-title { height: 25px; background: linear-gradient(#bccbdb, #d7e4f0); display: flex; align-items: center; padding-left: 234px; font-size: 15px; color: #222; border-radius: 0 3px 0 0; }
.ewb-name { display: inline-block; }
.win-buttons { display: flex; gap: 2px; margin-left: auto; margin-right: 4px; }
.ewb-menu { height: 19px; background: #f4f6f8; display: flex; align-items: center; padding-left: 21px; gap: 14px; color: #707070; }
.ewb-menu span { display: inline-block; }
.ewb-tools { height: 70px; width: 835px; background: #efefef; border-top: 1px solid #999; display: flex; justify-content: space-between; }
.tool-rows { padding-top: 4px; padding-left: 2px; }
.row { display: flex; height: 30px; margin-bottom: 4px; gap: 8px; }
.row-1 { padding-left: 7px; }
.cluster { display: flex; }
.tool { width: 31px; height: 30px; background: #efefef; border: 1px solid #fff; border-right: 2px solid #777; border-bottom: 2px solid #777; font-family: "Liberation Sans", sans-serif; }
.pressed { background: #fafafa; border: 1px solid #777; border-width: 2px 1px 1px 2px; }
.combo { width: 83px; height: 24px; border: 2px solid #777; border-right-width: 1px; border-bottom-width: 1px; margin-left: -5px; background: #fff; display: flex; justify-content: space-between; font: 700 15px/19px "Liberation Sans", sans-serif; padding-left: 2px; }
.combo b { transform: scaleX(.86); transform-origin: left; }
.combo i { width: 17px; background: #efefef; border-right: 2px solid #777; border-bottom: 2px solid #777; display: flex; align-items: center; justify-content: center; }
.help { margin-left: 2px; }
.power { padding-top: 11px; width: 60px; }
.pause { margin-top: 11px; width: 48px; height: 23px; border: 1px solid #000; background: #fff; box-shadow: inset 1px 1px #fff, inset -1px -1px #fff, inset 4px 4px #bbb, inset -4px -4px #808080; font: 10px/21px "DejaVu Sans", sans-serif; text-align: center; color: #000; }
.pause span { display: inline-block; }
.sheet { width: 835px; height: 718px; border-top: 1px solid #505050; border-right: 1px solid #505050; border-bottom: 1px solid #505050; border-radius: 0 4px 0 0; padding-right: 2px; background: #d9e6f2; }
.sheet-title { height: 26px; background: linear-gradient(#bccbdb, #d7e4f0); padding: 5px 0 0 401px; font-size: 14px; line-height: 20px; color: #222; }
.sheet-title span { display: inline-block; }
.sheet-body { display: flex; height: 670px; }
.canvas { background: #fff; width: 815px; padding: 157px 0 0 179px; }
.schematic { font-family: "Liberation Sans", sans-serif; }
.vscroll { width: 17px; background: #efefef; display: flex; flex-direction: column; align-items: center; padding: 6px 0 5px; }
.vscroll i { display: block; width: 16px; height: 210px; margin: 217px 0 auto; background: #cdcdcd; }
.vscroll path, .hscroll path { fill: none; stroke: #555; stroke-width: 2; }
.hscroll { height: 17px; background: #efefef; display: flex; align-items: center; padding-left: 133px; width: 832px; }
.hscroll i { width: 273px; height: 16px; background: #cdcdcd; margin-right: auto; }
.hscroll .grip { margin-left: 12px; margin-right: 2px; }
.hscroll .grip path { fill: #bbb; stroke: none; }
.ewb-status { display: flex; margin-top: 1px; height: 22px; width: 835px; background: #efefef; color: #111; align-items: stretch; position: relative; }
.ewb-status span { border-top: 1px solid #999; border-left: 1px solid #999; border-bottom: 1px solid #fff; border-right: 1px solid #fff; line-height: 19px; margin-right: 3px; padding-left: 1px; }
.ewb-status em { font-style: normal; display: inline-block; }
.s1 { width: 76px; } .s2 { width: 97px; } .s3 { width: 167px; } .s4 { width: 88px; } .s5 { flex: 1; }
.ewb-status svg { position: absolute; right: 1px; bottom: 2px; }
.sources { position: absolute; left: 0; top: 114px; width: 400px; height: 100px; border: 1px solid #505050; border-width: 1px 1px 2px 0; border-radius: 0 4px 0 0; background: #d9e6f2; padding-right: 3px; z-index: 2; }
.sources header { height: 25px; width: 398px; background: linear-gradient(#bccbdb, #d7e4f0); padding: 3px 0 0 168px; font-size: 15px; line-height: 20px; color: #222; display: flex; }
.sources header span { width: max-content; height: 20px; }
.sources .stub { position: absolute; left: 18px; top: 5px; }
.sources .x { position: absolute; right: 5px; top: 4px; }
.source-rows { border-top: 1px solid #999; background: #efefef; padding: 3px 0 0 6px; height: 69px; }
.source-rows .row { margin-bottom: 5px; }

.taskbar { position: absolute; left: 0; top: 860px; width: 1600px; height: 40px; display: flex; align-items: center; color: #fff; box-shadow: inset 0 1px #8b6a35; }
.backdrop { position: absolute; inset: 0; }
.taskbar > *:not(.backdrop) { position: relative; }
.start { margin: -1px 13px 0 11px; }
.task { height: 39px; margin-top: 1px; display: flex; align-items: center; justify-content: center; border: 1px solid rgba(255, 235, 195, .65); background: rgba(235, 205, 150, .3); flex: none; }
.t1 { width: 58px; }
.ie { margin: 0 30px 0 18px; }
.store { margin-right: 17px; }
.t2 { width: 59px; border-color: #fff2d8; background: rgba(245, 225, 190, .5); }
.t3 { width: 59px; margin-left: 3px; }
.tray { display: flex; margin-left: auto; align-items: center; padding-right: 18px; }
.lang { margin-left: 12px; display: inline-block; }
.clock { margin-left: 17px; padding-top: 2px; display: flex; flex-direction: column; align-items: center; line-height: 17px; }
</style>
